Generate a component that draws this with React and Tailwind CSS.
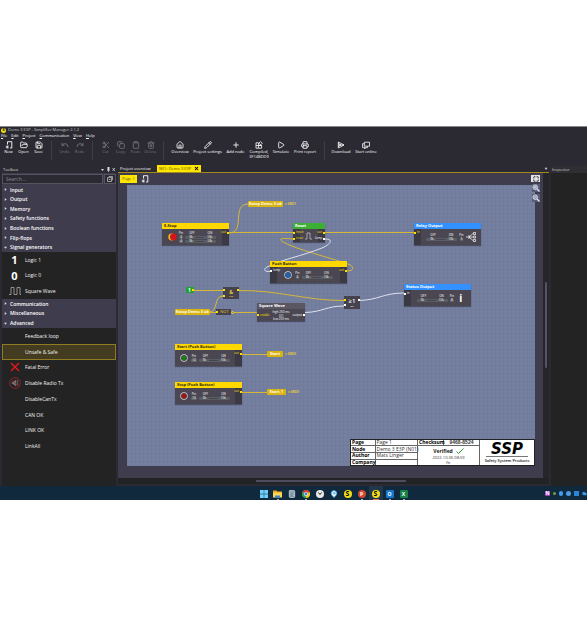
import clsx from "clsx"
import {
  Calculator, Cloud, Clipboard, Copy, FolderOpen, House, Maximize, MapPin, Pencil, Play,
  Plus, Printer, Redo, Save, Scissors, Trash2, Undo, X
} from "lucide-react"

const NewPageIcon = ({ className }) => (
  <svg viewBox="0 0 8 8" className={className} fill="none" stroke="currentColor">
    <path d="M2.500 3.500V.7h4.300v6.300H5M5 .7v0" strokeWidth="0.9" />
    <path d="M2.300 4.300v3.400M.6 6h3.400M1.100 4.800l2.400 2.400M3.500 4.800 1.100 7.200" strokeWidth="0.6" />
  </svg>
)

const CompiledIcon = ({ className }) => (
  <svg viewBox="0 0 8 8" className={className} fill="none" stroke="currentColor" strokeWidth="0.8">
    <path d="M1 1.800h2.600v5.400H1zM1 4.500h5.600M3.600 4.500h3v2.700h-3M5.600 .5 7.300 2.200 5.600 3.900 3.900 2.200z" />
  </svg>
)

const DownloadIcon = ({ className }) => (
  <svg viewBox="0 0 8 8" className={className} fill="none" stroke="currentColor" strokeWidth="0.8">
    <path d="M1.300 1 7 4 1.300 7zM1.300 4H7M1.300 2.500 4 4 1.300 5.500" />
  </svg>
)

const OnlineIcon = ({ className }) => (
  <svg viewBox="0 0 8 8" className={className} fill="none" stroke="currentColor" strokeWidth="0.8">
    <path d="M2.300 1.200h5.200v4H2.300zM2.300 2.700H.6v4h4.800V5.200M3.500 7.300h-1.500" />
  </svg>
)

const ZoomIcon = ({ plus }) => (
  <svg viewBox="0 0 8 8" className="size-[8px]" fill="none" stroke="#e8e8ee">
    <circle cx="3.200" cy="3.200" r="2.300" fill="#8f95ac" strokeWidth="0.8" />
    <path d="m5 5 2.500 2.500" strokeWidth="1.300" />
    <path d={plus ? "M2 3.200h2.400M3.200 2v2.400" : "M2 3.200h2.400"} strokeWidth="0.6" />
  </svg>
)

const tools = [
  [
    { label: "New", icon: NewPageIcon, width: "w-[15px]" },
    { label: "Open", icon: FolderOpen, width: "w-[15px]" },
    { label: "Save", icon: Save, width: "w-[15px]" }
  ],
  [
    { label: "Undo", icon: Undo, width: "w-[15px]", disabled: true },
    { label: "Redo", icon: Redo, width: "w-[15px]", disabled: true }
  ],
  [
    { label: "Cut", icon: Scissors, width: "w-[15px]", disabled: true },
    { label: "Copy", icon: Copy, width: "w-[15px]", disabled: true },
    { label: "Paste", icon: Clipboard, width: "w-[15px]", disabled: true },
    { label: "Delete", icon: Trash2, width: "w-[15px]", disabled: true }
  ],
  [
    { label: "Overview", icon: House, width: "w-[22px]" },
    { label: "Project settings", icon: Pencil, width: "w-[33px]" },
    { label: "Add node", icon: Plus, width: "w-[23px]" },
    { label: "Compiled,", extra: "3F14BDD9", icon: CompiledIcon, width: "w-[24px]" },
    { label: "Simulate", icon: Play, width: "w-[20px]" },
    { label: "Print report", icon: Printer, width: "w-[28px]" }
  ],
  [
    { label: "Download", icon: DownloadIcon, width: "w-[22px]" },
    { label: "Start online", icon: OnlineIcon, width: "w-[28px]" }
  ]
]

const Toolbar = () => (
  <div className="flex h-[27px] items-start bg-[#2b2a33] pl-px">
    {tools.map((group, index) => (
      <div key={index} className="flex">
        {index > 0 && <span className="mx-[5px] mt-[2px] h-[19px] w-px bg-[#3f3e47]" />}
        {group.map(({ label, extra, icon: Icon, width, disabled }) => (
          <button
            key={label}
            disabled={disabled}
            className={clsx(
              "flex flex-col items-center pt-[2px] text-[4px] leading-[5px] font-medium whitespace-nowrap",
              width,
              disabled ? "text-[#77767e]" : "text-white"
            )}
          >
            <Icon className="size-[8px]" strokeWidth={2.5} />
            <span>{label}</span>
            {extra && <span>{extra}</span>}
          </button>
        ))}
      </div>
    ))}
  </div>
)

const SquareWaveIcon = ({ className }) => (
  <svg viewBox="0 0 12 8" className={className} fill="none" stroke="currentColor" strokeWidth="0.8">
    <path d="M0 7.500h2V.5h3v7h3V.5h3v7h1" />
  </svg>
)

const GroupRow = ({ label, open }) => (
  <button className="flex items-center bg-[#3f3c4d] pl-[2px] text-left text-[5px] leading-[6px] font-semibold text-white">
    <span className="w-[6px]">
      <svg viewBox="0 0 4 4" className="size-[3px] fill-[#dddddd]">
        {open ? <path d="M0 1h4L2 3.500z" /> : <path d="M1 0v4L3.500 2z" />}
      </svg>
    </span>
    {label}
  </button>
)

const ItemRow = ({ label, icon, selected }) => (
  <button
    className={clsx(
      "flex items-center border text-left text-[5px] leading-[6px] font-medium text-[#f2f2f2]",
      selected ? "border-[#8f7c22] bg-[#433c20]" : "border-transparent"
    )}
  >
    <span className="ml-[5px] flex w-[13px] justify-center">{icon}</span>
    <span className="ml-[4px]">{label}</span>
  </button>
)

const Toolbox = () => (
  <aside className="flex w-[114px] shrink-0 flex-col bg-[#232323]">
    <div className="flex h-[7px] items-center bg-[#2b2a33] pl-px text-[4px] leading-[5px] text-[#dddddd]">
      <span className="flex-1">Toolbox</span>
      <svg viewBox="0 0 16 5" className="h-[5px] w-[16px] fill-[#dddddd]">
        <path d="M1 2h3L2.500 4z" />
        <path d="M7.500 0h2v3h-2zM7 3h3v.6H7zM8.200 3.600h.7V5h-.7z" />
        <path d="m12.500 1 2.500 3m0-3-2.500 3" stroke="#dddddd" strokeWidth="0.7" />
      </svg>
    </div>
    <div className="flex h-[12px] items-center gap-px bg-[#3f3c4d] text-[4px]">
      <input
        aria-label="Search"
        placeholder="Search..."
        className="h-[10px] min-w-0 flex-1 border border-[#55535f] bg-[#2b2a33] pl-[3px] text-[5px] text-white placeholder:text-[#8b8994]"
      />
      <button aria-label="Collapse all" className="flex h-[10px] w-[12px] items-center justify-center border border-[#55535f] bg-[#2b2a33] text-[#cccccc]">
        <svg viewBox="0 0 6 6" className="size-[6px]" fill="none" stroke="currentColor" strokeWidth="0.7">
          <path d="M.5 1.500h4v4h-4zM1.500 3.500h2M1.800 .5h3.700v3.700" />
        </svg>
      </button>
    </div>
    <div className="grid h-[67px] grid-rows-7">
      <GroupRow label="Input" />
      <GroupRow label="Output" />
      <GroupRow label="Memory" />
      <GroupRow label="Safety functions" />
      <GroupRow label="Boolean functions" />
      <GroupRow label="Flip-flops" />
      <GroupRow label="Signal generators" open />
    </div>
    <div className="grid h-[47px] grid-rows-3">
      <ItemRow label="Logic 1" icon={<span className="text-[11px] leading-[11px] font-bold text-white">1</span>} />
      <ItemRow label="Logic 0" icon={<span className="text-[11px] leading-[11px] font-bold text-white">0</span>} />
      <ItemRow label="Square Wave" icon={<SquareWaveIcon className="h-[8px] w-[12px] text-[#aaaaaa]" />} />
    </div>
    <div className="grid h-[29px] grid-rows-3">
      <GroupRow label="Communication" />
      <GroupRow label="Miscellaneous" />
      <GroupRow label="Advanced" open />
    </div>
    <div className="grid h-[126px] grid-rows-8">
      <ItemRow label="Feedback loop" />
      <ItemRow label="Unsafe & Safe" selected />
      <ItemRow
        label="Fatal Error"
        icon={
          <svg viewBox="0 0 10 10" className="size-[10px]" stroke="#f01818" strokeWidth="1.300">
            <path d="m1 1 8 8M9 1 1 9" />
          </svg>
        }
      />
      <ItemRow
        label="Disable Radio Tx"
        icon={
          <svg viewBox="0 0 12 12" className="size-[12px]" fill="none" stroke="#a3262b">
            <circle cx="6" cy="6" r="5.400" strokeWidth="0.8" />
            <path d="M2.500 6 7 3v6z" fill="#77747c" stroke="#77747c" strokeWidth="0.5" />
            <path d="M8.700 2.800v6.400" stroke="#77747c" strokeWidth="0.8" />
            <path d="m2.500 2.500 7 7" strokeWidth="0.8" />
          </svg>
        }
      />
      <ItemRow label="DisableCanTx" />
      <ItemRow label="CAN OK" />
      <ItemRow label="LINK OK" />
      <ItemRow label="LinkAll" />
    </div>
  </aside>
)

const Port = ({ white }) => (
  <span className={clsx("size-[2px] shrink-0", white ? "bg-white" : "bg-[#ffe000]")} />
)

const Column = ({ title, values }) => (
  <span className="flex flex-col items-center gap-px">
    <span className="leading-[3px]">{title}</span>
    {values.map((value, index) => (
      <span key={index} className="rounded-[1px] bg-[#62646a] px-px leading-[3px]">
        {value}
      </span>
    ))}
  </span>
)

// OFF and ON share one strip: the range between them runs across the node
const Range = ({ off, on }) => (
  <span className="flex w-[31px] flex-col gap-px">
    <span className="flex justify-between px-[4px] leading-[3px]">
      <span>OFF</span>
      <span>ON</span>
    </span>
    {off.map((value, index) => (
      <span key={index} className="flex justify-between rounded-[1px] bg-[#5a5e63] px-[4px] leading-[3px]">
        <span>{value}</span>
        <span className="my-px w-[9px] bg-[#454450]" />
        <span>{on[index]}</span>
      </span>
    ))}
  </span>
)

const PortLabel = ({ port, right }) => (
  <span
    className={clsx(
      "flex h-[3px] items-center gap-px leading-[3px]",
      right && "flex-row-reverse",
      port.white ? "text-white" : "text-[#ffe000]"
    )}
  >
    <Port white={port.white} />
    {port.name}
  </span>
)

const Node = ({ title, place, head, left, right, children }) => (
  <div className={clsx("absolute flex flex-col bg-[#4a4753] text-[3px] leading-[4px] text-white shadow-[0_1px_1px_rgba(0,0,0,0.35)]", place)}>
    <div className={clsx("h-[6px] pl-[2px] text-[4px] leading-[6px] font-bold whitespace-nowrap", head)}>{title}</div>
    <div className="flex flex-1">
      {left && (
        <div className="flex w-[7px] flex-col gap-[3px] bg-[#3b3944] pt-[2px]">
          {left.map((port) => <PortLabel key={port.name} port={port} />)}
        </div>
      )}
      <div className="flex flex-1 items-center justify-center gap-[2px]">{children}</div>
      {right && (
        <div className="flex w-[7px] flex-col items-end gap-[3px] bg-[#3b3944] pt-[2px]">
          {right.map((port) => <PortLabel key={port.name} port={port} right />)}
        </div>
      )}
    </div>
  </div>
)

const yellowHead = "bg-[#ffd800] text-[#2b2a10]"
const blueHead = "bg-[#3391ff] text-white"

const Lamp = ({ className }) => (
  <svg viewBox="0 0 8 8" className={clsx("mr-px size-[8px] shrink-0", className)}>
    <circle cx="4" cy="4" r="3.700" fill="#d5d5d8" />
    <circle cx="4" cy="4" r="3" fill="#4a4753" />
    <circle cx="4" cy="4" r="2.500" fill="currentColor" />
  </svg>
)

const Tag = ({ label, place, group }) => (
  <div className={clsx("absolute flex h-[6px] items-center gap-[2px] text-[3px] leading-[6px] font-bold whitespace-nowrap", place)}>
    <span className="flex-1 rounded-[1px] bg-[#d9b310] text-center text-[4px] text-white">{label}</span>
    {group && <span className="text-[#e6cc3c]">= {group}</span>}
  </div>
)

const Wires = () => (
  <svg viewBox="0 0 408 281" className="absolute top-0 left-0 h-[281px] w-[408px]" fill="none">
    <g stroke="#d6b838" strokeWidth="1">
      <path d="M102 48C119 48 104 19 121 19" />
      <path d="M102 47.500H166M198 47.500H287" />
      <path d="M220 86c8 0 7-5 1-7-20-7-50-14-65-22-6-4 1-4 10-3" />
      <path d="M66 105.500H96M82 127.500H89M106 127.500H131" />
      <path d="M82 127C92 127 86 111 96 111" />
      <path d="M111 105.500C152 105 178 115.500 217 115.500" />
      <path d="M115 169.500H140M115 207.500H140" />
    </g>
    <g stroke="#dfe3ee" strokeWidth="1">
      <path d="M198 54c9 0 6 5-3 9-20 8-42 12-55 19-5 3-1 5 3 4.500" />
      <path d="M178 127.500C196 127 199 121 217 121" />
      <path d="M232 115.500C252 115 256 108 277 108" />
    </g>
  </svg>
)

const TitleBlock = () => (
  <div className="absolute right-0 bottom-0 flex h-[27px] w-[185px] border border-[#222222] bg-white text-[5px] leading-[5px] text-[#333333]">
    <table className="h-[25px] w-[67px] table-fixed border-collapse">
      <tbody>
        {[["Page", "Page 1"], ["Node", "Demo 3 E3P (N01)"], ["Author", "Mats Linger"], ["Company", ""]].map(([name, value]) => (
          <tr key={name} className="border-b border-[#666666] last:border-b-0">
            <th scope="row" className="w-[24px] border-r border-[#666666] p-0 pl-px text-left font-bold text-black">{name}</th>
            <td className="border-r border-[#666666] p-0 pl-px whitespace-nowrap">{value}</td>
          </tr>
        ))}
      </tbody>
    </table>
    <div className="flex w-[62px] flex-col items-center border-r border-[#666666] text-[4px]">
      <div className="flex h-[6px] w-full border-b border-[#666666] text-[5px]">
        <span className="w-[26px] border-r border-[#666666] pl-px font-bold text-black">Checksum</span>
        <span className="flex-1 text-center font-['Liberation_Sans'] font-bold">9468-8524</span>
      </div>
      <span className="mt-px flex h-[8px] items-center gap-[3px] text-[5px] font-bold text-[#222222]">
        Verified
        <svg viewBox="0 0 8 6" className="h-[6px] w-[8px]" fill="none" stroke="#25902f">
          <path d="m.5 3.500 2 2L7.500.5" />
        </svg>
      </span>
      <span>2022-10-06 08:59</span>
      <span>ftr</span>
    </div>
    <div className="flex flex-1 flex-col items-center justify-center text-black">
      <span className="border-b border-[#777777] px-[5px] font-['DejaVu_Sans'] text-[15px] leading-[14px] font-bold italic">SSP</span>
      <span className="mt-px font-['Noto_Sans'] text-[4px] font-medium whitespace-nowrap">Safety System Products</span>
    </div>
  </div>
)

const Canvas = () => (
  <div className="relative min-h-[281px] flex-1 bg-[#757f9f] bg-[linear-gradient(#717b9c_1px,transparent_1px),linear-gradient(90deg,#717b9c_1px,transparent_1px)] bg-[size:4px_4px]">
    <Wires />

    <Tag label="Estop Demo 3 ok" group="GND1" place="left-[121px] top-[16px] w-[48px]" />
    <Node title="E-Stop" head={yellowHead} place="left-[35px] top-[38px] h-[22px] w-[67px]" right={[{ name: "out" }]}>
      <svg viewBox="0 0 9 8" className="h-[8px] w-[9px] shrink-0">
        <circle cx="3.700" cy="4" r="3.400" fill="#e8c01c" />
        <circle cx="5.400" cy="4" r="3.400" fill="#d3161b" />
      </svg>
      <Column title="Pin" values={["3", "4"]} />
      <Range off={["9k", "9k"]} on={["10k", "10k"]} />
    </Node>
    <Node
      title="Reset"
      head="bg-[#3daf35] text-white"
      place="left-[166px] top-[38px] h-[19px] w-[32px]"
      left={[{ name: "input" }, { name: "reset" }]}
      right={[{ name: "out" }, { name: "lamp", white: true }]}
    >
      <svg viewBox="0 0 8 8" className="size-[8px] shrink-0" fill="none" stroke="#cccccc" strokeWidth="0.7">
        <path d="M0 7h2V1h3v6h2" />
      </svg>
    </Node>
    <Node title="Relay Output" head={blueHead} place="left-[287px] top-[38px] h-[22px] w-[67px]" left={[{ name: "in" }]}>
      <Range off={["9k"]} on={["10k"]} />
      <Column title="Pin" values={["5"]} />
      <svg viewBox="0 0 10 10" className="size-[10px]" fill="none" stroke="#eeeeee" strokeWidth="0.8">
        <path d="M0 5h7M3 5 7 1.500M3 5l4 3.500M3 3v4" />
        <path d="M7.500 .5h2v2h-2zM7.500 4h2v2h-2zM7.500 7.500h2v2h-2z" />
      </svg>
    </Node>
    <Node
      title="Push Button"
      head={yellowHead}
      place="left-[143px] top-[76px] h-[22px] w-[77px]"
      left={[{ name: "lamp", white: true }]}
      right={[{ name: "out" }]}
    >
      <Lamp className="text-[#1b62b5]" />
      <Column title="Pin" values={["6"]} />
      <Range off={["9k"]} on={["10k"]} />
    </Node>
    <Node title="Status Output" head={blueHead} place="left-[277px] top-[99px] h-[22px] w-[67px]" left={[{ name: "in", white: true }]}>
      <Range off={["9k"]} on={["10k"]} />
      <Column title="Pin" values={["8"]} />
      <span className="mx-[3px] text-[10px] leading-[10px] font-bold text-white">i</span>
    </Node>

    <div className="absolute top-[102px] left-[59px] flex h-[6px] w-[8px] items-center justify-between rounded-[1px] bg-[#22a033] pl-[2px] text-[5px] leading-[6px] font-bold text-white">
      1 <Port />
    </div>
    <div className="absolute top-[102px] left-[96px] flex h-[12px] w-[16px] justify-between bg-[#45424e] py-[2px] text-[#e2c22c]">
      <span className="flex flex-col justify-between"><Port /><Port /></span>
      <span className="flex flex-col items-center text-[5px] leading-[6px] font-bold">
        &amp;
        <span className="text-[2px] leading-[3px]">AND</span>
      </span>
      <Port />
    </div>
    <Tag label="Estop Demo 3 ok" place="left-[48px] top-[124px] w-[35px]" />
    <div className="absolute top-[124px] left-[89px] flex h-[6px] w-[18px] items-center text-[4px] leading-[6px] font-medium text-[#e2c22c]">
      <span className="flex h-[6px] flex-1 items-center justify-center bg-[#45424e]"><Port /><span className="flex-1 text-center">NOT</span></span>
      <span className="size-[3px] rounded-full border border-[#ffe000]" />
    </div>
    <Node
      title="Square Wave"
      head="bg-[#5a5763] text-white"
      place="left-[130px] top-[118px] h-[18px] w-[48px]"
    >
      <span className="flex flex-1 items-center gap-px text-[#ffe000]"><Port />enable</span>
      <span className="flex flex-col items-center leading-[4px] whitespace-nowrap">
        high 250 ms
        <SquareWaveIcon className="h-[3px] w-[8px]" />
        low 250 ms
      </span>
      <span className="flex flex-1 items-center justify-end gap-px">output<Port white /></span>
    </Node>
    <div className="absolute top-[111px] left-[217px] flex h-[13px] w-[16px] justify-between bg-[#45424e] py-[3px] text-white">
      <span className="flex flex-col justify-between"><Port /><Port white /></span>
      <span className="flex flex-col items-center text-[6px] leading-[5px] font-semibold">
        ≥1
        <span className="text-[2px] leading-[5px]">OR</span>
      </span>
      <Port white />
    </div>

    <Node title="Start (Push Button)" head={yellowHead} place="left-[48px] top-[159px] h-[22px] w-[67px]" right={[{ name: "out" }]}>
      <Lamp className="text-[#1d7a1d]" />
      <Column title="Pin" values={["12"]} />
      <Range off={["9k"]} on={["10k"]} />
    </Node>
    <Tag label="Start" group="GND3" place="left-[140px] top-[166px] w-[29px]" />
    <Node title="Stop (Push Button)" head={yellowHead} place="left-[48px] top-[197px] h-[22px] w-[67px]" right={[{ name: "out" }]}>
      <Lamp className="text-[#a31414]" />
      <Column title="Pin" values={["13"]} />
      <Range off={["9k"]} on={["10k"]} />
    </Node>
    <Tag label="Start_1" group="GND3" place="left-[140px] top-[204px] w-[32px]" />

    <TitleBlock />
  </div>
)

const Editor = () => (
  <main className="flex min-w-0 flex-1 flex-col bg-[#2b2a33]">
    <div className="flex h-[7px] items-end border-b border-[#a38a1c] text-[4px] leading-[6px]">
      <button className="w-[39px] pl-[2px] text-left font-medium text-white">Project overview</button>
      <button className="flex h-[7px] items-center gap-[3px] bg-[#ffe600] px-[2px] font-medium whitespace-nowrap text-[#55500a]">
        N01: Demo 3 E3P
        <X className="size-[5px] text-black" strokeWidth={5} />
      </button>
      <span className="ml-auto pr-px text-[4px] text-[#dddddd]">▼</span>
    </div>
    <div className="flex flex-1">
      <div className="flex flex-1 flex-col bg-[#3f3c4d]">
        <div className="flex h-[12px] items-center pl-[2px] text-white">
          <button className="h-[8px] w-[17px] bg-[#ffe600] text-[4px] leading-[8px] font-medium text-[#55500a]">Page 1</button>
          <button aria-label="Add page" className="ml-[4px]"><NewPageIcon className="size-[8px]" /></button>
        </div>
        <div className="relative flex flex-1 pr-[8px] pb-[12px] pl-[9px]">
          <Canvas />
          <div className="absolute top-[-10px] right-[3px] flex flex-col items-center gap-[2px] text-white">
            <button aria-label="Fit page" className="flex h-[7px] w-[9px] items-center justify-center bg-[#e4e4e4] text-[#2b2a33]">
              <Maximize className="size-[6px]" strokeWidth={4} />
            </button>
            <button aria-label="Zoom in" className="bg-[#565c7a]"><ZoomIcon plus /></button>
            <button aria-label="Zoom out" className="bg-[#565c7a]"><ZoomIcon /></button>
          </div>
        </div>
      </div>
      <div className="flex w-[6px] justify-center bg-[#26252a] pt-[109px]">
        <span className="h-[86px] w-[2px] rounded-full bg-[#55536a]" />
      </div>
    </div>
    <div className="flex h-[6px] items-center justify-center bg-[#232326] pr-[6px]">
      <span className="h-[2px] w-[150px] bg-[#4d4b5c]" />
    </div>
    <div className="h-[2px] bg-[#2b2a33]" />
  </main>
)

const S = () => (
  <span className="flex size-[8px] items-center justify-center rounded-full bg-[#f5df1a] text-[7px] leading-[8px] font-bold text-black">S</span>
)

const AppTile = ({ letter, size = "size-[8px]", className }) => (
  <span className={clsx("flex items-center justify-center rounded-[1px] text-[5px] leading-[5px] font-bold text-white", size, className)}>
    {letter}
  </span>
)

const apps = [
  {
    name: "Start",
    icon: (
      <svg viewBox="0 0 8 8" className="size-[8px] fill-[#6fd0fb]">
        <path d="M0 0h3.800v3.800H0zM4.200 0H8v3.800H4.200zM0 4.200h3.800V8H0zM4.200 4.200H8V8H4.200z" />
      </svg>
    )
  },
  {
    name: "Explorer",
    running: true,
    icon: (
      <svg viewBox="0 0 9 8" className="h-[8px] w-[9px]">
        <path d="M0 .5h3.500l1 1H9V4H0z" fill="#e9a51c" />
        <path d="M0 2.500h9v5H0z" fill="#ffd557" />
        <path d="M2 5.500h5v2H2z" fill="#2f86d8" />
      </svg>
    )
  },
  { name: "Calculator", icon: <Calculator className="size-[8px] fill-[#5f7686] text-[#b9cbd6]" strokeWidth={3} /> },
  {
    name: "Chrome",
    running: true,
    icon: (
      <svg viewBox="0 0 8 8" className="size-[8px]">
        <circle cx="4" cy="4" r="4" fill="#2fa84f" />
        <path d="M4 4 .5 2A4 4 0 0 1 7.500 2z" fill="#e5392f" />
        <path d="M4 4 7.500 2A4 4 0 0 1 4 8z" fill="#fbc316" />
        <circle cx="4" cy="4" r="1.900" fill="#ffffff" />
        <circle cx="4" cy="4" r="1.400" fill="#3b7de9" />
      </svg>
    )
  },
  {
    name: "Clock",
    icon: (
      <svg viewBox="0 0 8 8" className="size-[8px]" fill="none">
        <circle cx="4" cy="4" r="4" fill="#e9e9e9" />
        <path d="M2 2.500 4 4l2-1.500M4 4v1" stroke="#333333" strokeWidth="0.9" />
      </svg>
    )
  },
  { name: "Maps", icon: <MapPin className="size-[8px] fill-white text-[#5bb7ee]" strokeWidth={3} /> },
  { name: "Simplifier", icon: <S /> },
  { name: "PowerPoint", running: true, icon: <AppTile letter="P" className="rounded-full bg-[#d2472a]" /> },
  { name: "Simplifier Manager", active: true, icon: <S /> },
  { name: "Outlook", running: true, icon: <AppTile letter="O" className="bg-[#1877cf]" /> },
  { name: "Excel", running: true, icon: <AppTile letter="X" className="bg-[#178048]" /> }
]

const Taskbar = () => (
  <footer className="relative flex h-[14px] items-center justify-center bg-[#10293c] pl-[80px]">
    <div className="flex">
      {apps.map((app) => (
        <button
          key={app.name}
          aria-label={app.name}
          className={clsx(
            "flex h-[14px] w-[14px] flex-col items-center pt-[4px]",
            app.active && "bg-[#20384a]"
          )}
        >
          {app.icon}
          {app.active && <span className="mt-px h-px w-[6px] bg-[#e0705a]" />}
          {app.running && <span className="mt-px h-px w-[2px] bg-[#a9b4bc]" />}
        </button>
      ))}
    </div>
    <div className="absolute right-0 flex items-center gap-[3px]">
      <AppTile letter="N" size="size-[5px]" className="bg-[#a53fc0]" />
      <span className="size-[3px] rounded-full bg-[#7a9c3d]" />
      <span className="h-[5px] w-[4px] rounded-full bg-[#3f9df0]" />
      <span className="size-[5px] rounded-full bg-[#4c9ede]" />
      <span className="size-[5px] bg-[#2a86d4]" />
      <Cloud className="size-[5px] fill-[#3d9fe8] text-[#3d9fe8]" />
    </div>
  </footer>
)

const App = () => {
  return (
    <div className="min-h-screen bg-white pt-[126px] font-['Open_Sans','Noto_Sans',sans-serif] leading-none">
      <div className="border-t border-[#8a8a8a] bg-[#2b2a33]">
        <header>
          <div className="flex h-[6px] items-center gap-[2px] pl-px text-[4px] leading-[6px] text-[#cccccc]">
            <span className="flex size-[5px] items-center justify-center rounded-full bg-[#f5df1a] text-[4px] font-bold text-black">S</span>
            Demo 3 E3P - Simplifier Manager 2.1.2
          </div>
          <nav className="flex h-[6px] items-center gap-[4px] pl-px text-[4px] leading-[6px] font-medium text-white">
            {["File", "Edit", "Project", "Communication", "View", "Help"].map((item) => (
              <button key={item}>
                <span className="underline decoration-1">{item[0]}</span>
                {item.slice(1)}
              </button>
            ))}
          </nav>
          <Toolbar />
        </header>

        <div className="flex min-h-[320px] gap-[2px] pl-[2px]">
          <Toolbox />
          <Editor />
          <aside className="w-[36px] shrink-0 bg-[#232323]">
            <h2 className="h-[7px] bg-[#2f2e33] pl-px text-[4px] leading-[7px] text-[#cccccc]">Inspector</h2>
          </aside>
        </div>

        <Taskbar />
      </div>
    </div>
  )
}

export default App
